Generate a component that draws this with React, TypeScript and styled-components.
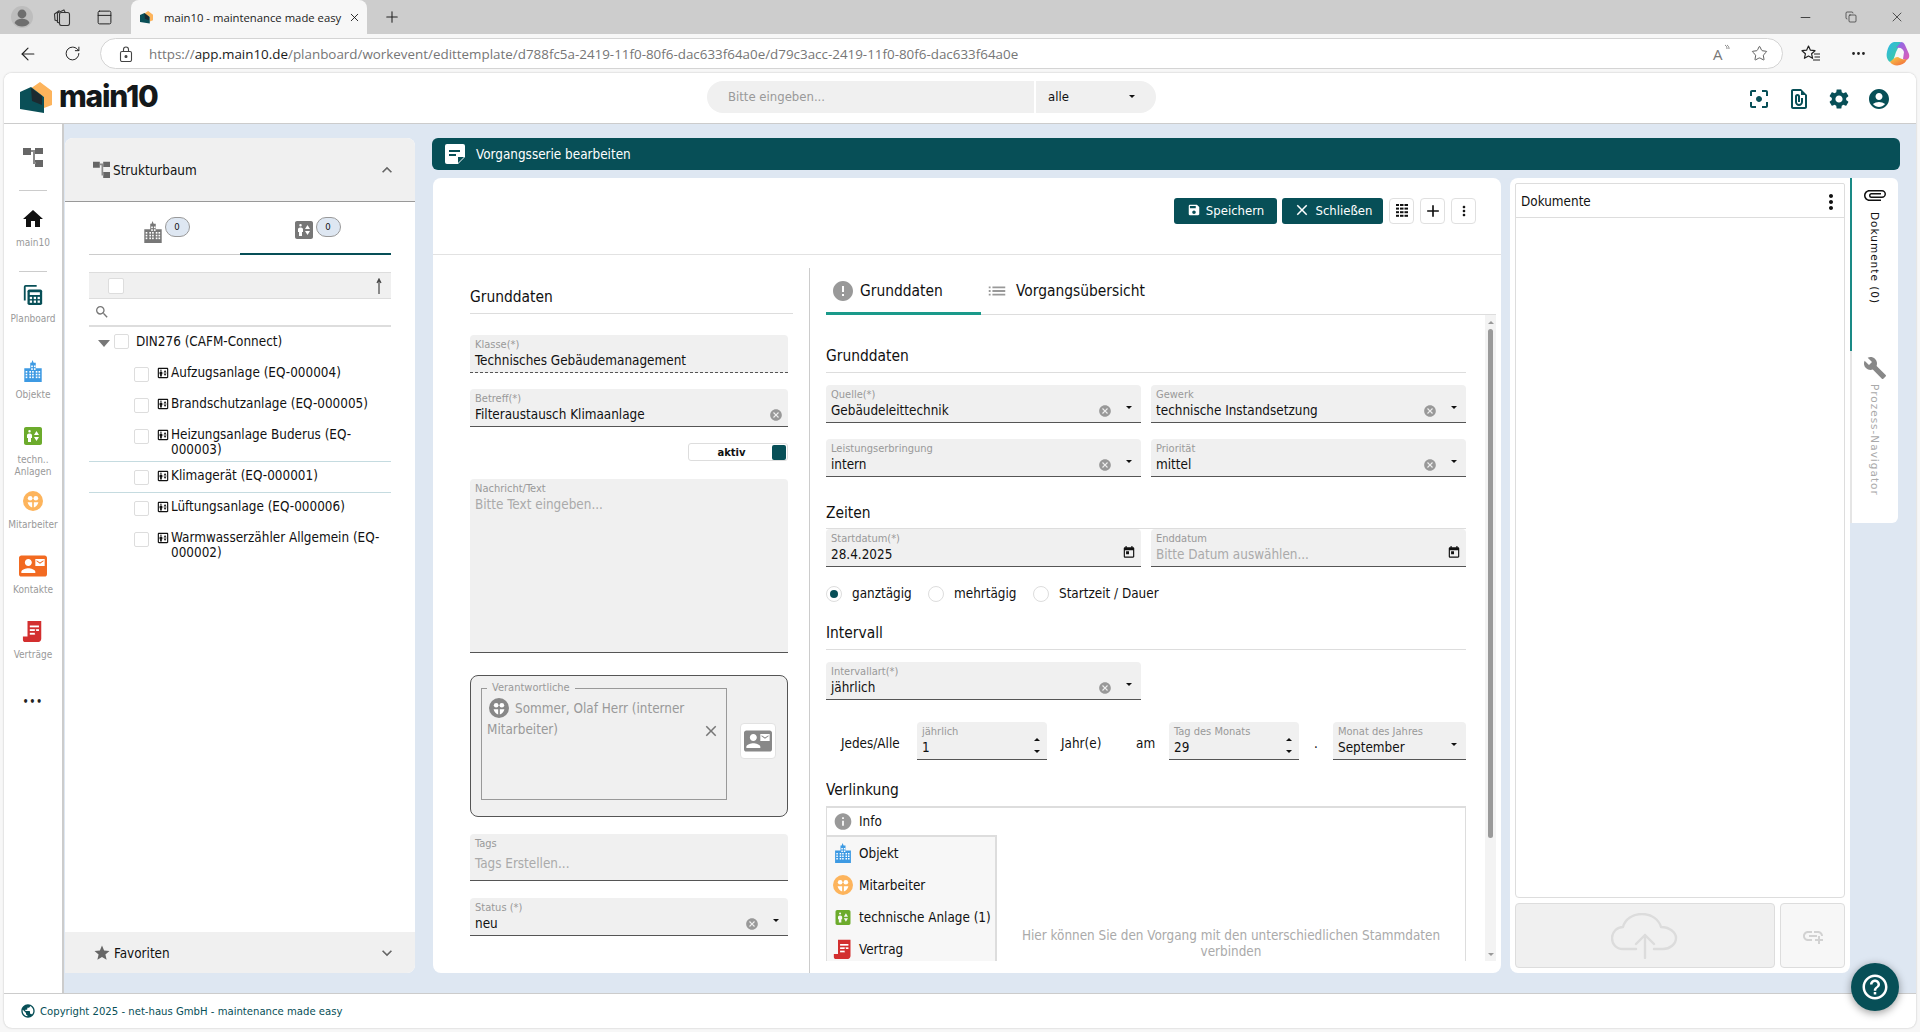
import React from 'react';
import styled, { createGlobalStyle } from 'styled-components';
import { ArrowLeft, Copy, Ellipsis, Minus, PanelTop, Plus, RotateCw, Star, X } from 'lucide-react';
import {
  MdAccountCircle,
  MdAdd,
  MdAddLink,
  MdAttachFile,
  MdBuild,
  MdCancel,
  MdClose,
  MdContactMail,
  MdElevator,
  MdError,
  MdExpandLess,
  MdExpandMore,
  MdFilterCenterFocus,
  MdHelpOutline,
  MdHome,
  MdInfo,
  MdList,
  MdMoreVert,
  MdOutlineElevator,
  MdOutlineFilePresent,
  MdPublic,
  MdSave,
  MdSearch,
  MdSettings,
  MdStar,
  MdToday,
} from 'react-icons/md';

const TEAL = '#074f57';
const BODY_FONT = '"DejaVu Sans", Verdana, sans-serif';

const GlobalStyle = createGlobalStyle`
  html, body {
    margin: 0;
    height: 1032px;
    overflow: hidden;
    background: #f7f7f7;
  }
  * { box-sizing: border-box; }
  body {
    font-family: ${BODY_FONT};
    font-stretch: condensed;
    font-size: 13.4px;
    color: #111;
  }
`;

/* drawn icons */
const BuildingIcon: React.FC<{ size?: number; color?: string }> = ({ size = 22, color = '#3d9ae3' }) => {
  const windows: number[][] = [];
  [4, 8, 11, 15, 18].forEach((x) => [12, 15, 18].forEach((y) => windows.push([x, y])));
  [10, 13].forEach((x) => [6, 9].forEach((y) => windows.push([x, y])));
  return (
    <svg width={size} height={size} viewBox="0 0 24 24">
      <path fill={color} d="M11.5 0l1.2 3H15v6h6.5v15h-19V9H9V3h1.4z" />
      {windows.map(([x, y]) => (
        <rect key={`${x}-${y}`} x={x} y={y} width="1.8" height="1.8" fill="#fff" />
      ))}
    </svg>
  );
};

const PeopleIcon: React.FC<{ size?: number; color?: string }> = ({ size = 20, color = '#fdb45c' }) => (
  <svg width={size} height={size} viewBox="0 0 24 24">
    <circle cx="12" cy="12" r="12" fill={color} />
    <circle cx="8.6" cy="8.7" r="2.8" fill="#fff" />
    <circle cx="15.4" cy="8.7" r="2.8" fill="#fff" />
    <path fill="#fff" d="M5.500 13.400h5.500v6.400c-2.800-.9-4.800-3.300-5.500-6.400zM13 13.400h5.500c-.7 3.100-2.700 5.500-5.500 6.400z" />
  </svg>
);

const ContractIcon: React.FC<{ size?: number }> = ({ size = 22 }) => (
  <svg width={size} height={size} viewBox="0 0 24 24">
    <path fill="#d32f2f" d="M6 1h15v19.5c0 1.9-1.4 3.5-3 3.5H3.5C2 24 1 23 1 21.5V18h5z" />
    <rect x="8.5" y="6" width="10" height="2" fill="#fff" />
    <rect x="8.5" y="10" width="10" height="2" fill="#fff" />
    <rect x="8.5" y="14" width="6" height="2" fill="#fff" />
    <rect x="14" y="10" width="1.4" height="6" fill="#d32f2f" />
  </svg>
);

const TreeIcon: React.FC<{ size?: number }> = ({ size = 20 }) => (
  <svg width={size} height={size} viewBox="0 0 20 20">
    <path fill="#666" d="M0 1h8v7H0zM12 1h8v6h-8zM12 13h8v7h-8z" />
    <path fill="#8a8a8a" d="M8 3h4v2H8zM10 5h2v11h-2zM10 15h3v2h-3z" />
  </svg>
);

const PlanIcon: React.FC<{ size?: number }> = ({ size = 22 }) => (
  <svg width={size} height={size} viewBox="0 0 24 24">
    <path fill="none" stroke={TEAL} strokeWidth="2" d="M3 18V3a1 1 0 0 1 1-1h12" />
    <rect x="6" y="6" width="16" height="17" rx="2" fill={TEAL} />
    <rect x="8.5" y="9" width="11" height="3" fill="#fff" />
    {[8.5, 12.8, 17].flatMap((x) =>
      [14, 18].map((y) => <rect key={`${x}-${y}`} x={x} y={y} width="2.5" height="2.5" fill="#fff" />),
    )}
  </svg>
);

const NoteIcon: React.FC = () => (
  <svg width="20" height="20" viewBox="0 0 20 20">
    <path fill="#fff" d="M2 0h16a2 2 0 0 1 2 2v11l-7 7H2a2 2 0 0 1-2-2V2a2 2 0 0 1 2-2z" />
    <path fill={TEAL} d="M4 6h11v2H4zM4 10h7v2H4zM13 13h6l-6 6z" />
  </svg>
);

const GridLinesIcon: React.FC = () => (
  <svg width="12" height="14" viewBox="0 0 12 14">
    {[0, 3.6, 7.2, 10.8].map((y) => (
      <React.Fragment key={y}>
        <rect x="0" y={y} width="3" height="2" fill="#111" />
        <rect x="4" y={y} width="8" height="2" fill="#111" />
      </React.Fragment>
    ))}
    <rect x="7.5" y="0" width="1" height="13" fill="#fff" />
  </svg>
);

const CloudIcon: React.FC = () => (
  <svg width="68" height="46" viewBox="0 0 68 46" fill="none" stroke="#dcdcdc" strokeWidth="2.4" strokeLinecap="round" strokeLinejoin="round">
    <path d="M25 36H12C5 36 1 31 1 25c0-6 5-11 11-11C14 6 22 1 31 1c10 0 17 6 19 13 8 0 15 5 15 11 0 6-6 11-13 11H43" />
    <path d="M34 45V22M25 31l9-9 9 9" />
  </svg>
);

const LogoSvg = styled.svg`
  flex: none;
`;

const LogoMark: React.FC<{ size?: number }> = ({ size = 32 }) => (
  <LogoSvg width={size} height={size} viewBox="0 0 32 32">
    <path fill="#fdb45c" d="M20 0l12 9v14l-8 3V15L10 7z" />
    <path fill="#0a4f57" d="M0 10l11-5 13 10v16L0 27z" />
    <path fill="#1c2a30" d="M11 6l11 8v9l-10-4z" />
  </LogoSvg>
);

const ProfileIcon: React.FC = () => (
  <svg width="22" height="22" viewBox="0 0 22 22">
    <circle cx="11" cy="11" r="11" fill="#bdbdbd" />
    <circle cx="11" cy="8" r="4.4" fill="#6e6e6e" />
    <path fill="#6e6e6e" d="M3.5 17c1-3 4-4.3 7.5-4.3s6.500 1.300 7.500 4.300c-2 2.400-4.500 3.500-7.500 3.500S5.500 19.400 3.500 17z" />
  </svg>
);

const CollectionsIcon: React.FC = () => (
  <svg width="18" height="18" viewBox="0 0 18 18" fill="none" stroke="#333" strokeWidth="1.1">
    <rect x="6.500" y="4.500" width="10" height="13" rx="2" />
    <path d="M6.500 15l-2-.6-.1-9.400 6.500-3 1.600 3M4.400 13L2 12 1.500 6l5-3.500" />
  </svg>
);

const LockIcon: React.FC = () => (
  <svg width="14" height="16" viewBox="0 0 14 16" fill="none" stroke="#444" strokeWidth="1.100">
    <rect x="1.500" y="5.500" width="11" height="10" rx="1.500" />
    <path d="M4.500 5.500V3.500a2.500 2.500 0 0 1 5 0v2" />
    <circle cx="7" cy="10.500" r="1" fill="#444" />
  </svg>
);

const FavoritesIcon: React.FC = () => (
  <svg width="20" height="20" viewBox="0 0 20 20" fill="none" stroke="#222" strokeWidth="1.200" strokeLinejoin="round">
    <path d="M7.500 2l1.900 4.200 4.600.5-3.400 3.100 1 4.500-4.100-2.300-4.100 2.300 1-4.500L1 6.700l4.600-.5z" />
    <path d="M13 10h6M13.500 13h5.500M12 16h7" />
  </svg>
);

const CopilotIcon: React.FC = () => (
  <svg width="24" height="25" viewBox="0 0 24 25">
    <defs>
      <linearGradient id="cp-a" x1="0" y1="0" x2="1" y2="1">
        <stop offset="0" stopColor="#2fb7ea" />
        <stop offset="1" stopColor="#3fcf8e" />
      </linearGradient>
      <linearGradient id="cp-b" x1="0" y1="0" x2="1" y2="1">
        <stop offset="0" stopColor="#7b6cf0" />
        <stop offset="1" stopColor="#e45bb5" />
      </linearGradient>
      <linearGradient id="cp-c" x1="0" y1="0" x2="1" y2="1">
        <stop offset="0" stopColor="#f7d046" />
        <stop offset="1" stopColor="#f2643c" />
      </linearGradient>
    </defs>
    <path fill="url(#cp-a)" d="M8 1h7l-5 10-3 9-3 1c-3-2-4-6-3-10 1-5 3-9 7-10z" />
    <path fill="url(#cp-b)" d="M15 1c2 0 3 1 4 3l4 9c1 4-1 6-4 6l-2-1 1-7c-1-3-3-5-8-4z" />
    <path fill="url(#cp-c)" d="M4 21c2 3 6 4 10 3 4-1 6-3 7-6-3 1-6 0-9-2-3 0-5 2-8 5z" />
  </svg>
);

/* browser chrome */
const Shell = styled.div`
  height: 1032px;
  display: flex;
  flex-direction: column;
`;

const TabStrip = styled.div`
  height: 34px;
  flex: none;
  background: #cdcdcd;
  display: flex;
  align-items: center;
  padding-left: 11px;
`;

const StripButton = styled.span<{ $w?: number }>`
  width: ${(p) => p.$w ?? 42}px;
  display: flex;
  justify-content: center;
  align-items: center;
  color: #222;
`;

const BrowserTab = styled.div`
  width: 236px;
  height: 34px;
  margin: 0 0 0 14px;
  padding: 0 6px 0 9px;
  background: #f7f7f7;
  border-radius: 8px 8px 0 0;
  display: flex;
  align-items: center;
  gap: 11px;
`;

const TabTitle = styled.span`
  flex: 1;
  min-width: 0;
  font-family: "Open Sans", sans-serif;
  font-stretch: normal;
  font-size: 11.300px;
  color: #222;
  white-space: nowrap;
`;

const TabClose = styled.span`
  flex: none;
  display: flex;
  margin-left: -5px;
`;

const StripSpacer = styled.div`
  flex: 1;
`;

const AddressRow = styled.div`
  height: 36px;
  flex: none;
  background: #f7f7f7;
  display: flex;
  align-items: flex-start;
  padding: 4px 0 0 6px;
`;

const NavButton = styled.span<{ $w?: number }>`
  width: ${(p) => p.$w ?? 44}px;
  height: 31px;
  display: flex;
  justify-content: center;
  align-items: center;
  color: #222;
`;

const AddressBox = styled.div`
  width: 1683px;
  height: 31px;
  margin-left: 6px;
  padding: 0 14px 0 18px;
  background: #fff;
  border: 1px solid #d4d4d4;
  border-radius: 16px;
  display: flex;
  align-items: center;
  gap: 16px;
`;

const UrlText = styled.div`
  flex: 1;
  font-family: "Open Sans", sans-serif;
  font-stretch: normal;
  font-size: 13.400px;
  color: #767676;
  white-space: nowrap;
`;

const UrlHost = styled.span`
  color: #1a1a1a;
`;

const ReadAloud = styled.span`
  display: flex;
  align-items: flex-start;
  gap: 1px;
  width: 22px;
  font-family: "Open Sans", sans-serif;
  font-stretch: normal;
  font-size: 15px;
  line-height: 20px;
  color: #777;
`;

/* app window */
const AppWindow = styled.div`
  position: relative;
  flex: none;
  height: 955px;
  margin: 3px 4px 4px;
  border-radius: 8px;
  overflow: hidden;
  display: flex;
  flex-direction: column;
  background: #fff;
  box-shadow: 0 0 2px rgba(0, 0, 0, 0.25);
`;

const TopBar = styled.header`
  height: 51px;
  flex: none;
  display: flex;
  align-items: center;
  padding: 0 25px 0 16px;
  background: #fff;
  border-bottom: 1px solid #ccc;
`;

const Brand = styled.div`
  width: 687px;
  display: flex;
  align-items: center;
  gap: 7px;
`;

const BrandName = styled.span`
  margin-bottom: 5px;
  font-family: Inter, sans-serif;
  font-stretch: normal;
  font-size: 30px;
  font-weight: 800;
  letter-spacing: -1.200px;
  color: #14181a;
  line-height: 32px;
`;

const SearchGroup = styled.div`
  display: flex;
  height: 32px;
  margin-bottom: 3px;
  gap: 2px;
`;

const SearchInput = styled.div`
  width: 327px;
  padding-left: 21px;
  border-radius: 16px 0 0 16px;
  background: #f0f0f0;
  color: #999;
  font-size: 13px;
  line-height: 31px;
`;

const SearchSelect = styled.div`
  width: 120px;
  padding: 0 21px 0 12px;
  border-radius: 0 16px 16px 0;
  background: #f0f0f0;
  display: flex;
  align-items: center;
  justify-content: space-between;
  font-size: 13px;
`;

const TopActions = styled.div`
  margin-left: auto;
  padding-top: 1px;
  display: flex;
  gap: 16px;
  color: ${TEAL};
`;

const Caret = styled.span`
  flex: none;
  display: inline-block;
  width: 0;
  height: 0;
  border-left: 3px solid transparent;
  border-right: 3px solid transparent;
  border-top: 3px solid #111;
`;

const Workspace = styled.div`
  flex: 1;
  min-height: 0;
  display: flex;
  background: #dee7f2;
`;

const Rail = styled.nav`
  width: 60px;
  flex: none;
  background: #fff;
  border-right: 2px solid #ccc;
  display: flex;
  flex-direction: column;
  align-items: center;
`;

const RailTop = styled.div`
  height: 66px;
  flex: none;
  display: flex;
  align-items: center;
  justify-content: center;
`;

const RailDivider = styled.div`
  width: 28px;
  height: 1px;
  flex: none;
  background: #ccc;
`;

const RailItem = styled.div<{ $h: number; $mt?: number }>`
  height: ${(p) => p.$h}px;
  flex: none;
  width: 100%;
  display: flex;
  flex-direction: column;
  align-items: center;
  margin-top: ${(p) => p.$mt ?? 0}px;
`;

const RailIcon = styled.span`
  height: 24px;
  flex: none;
  display: flex;
  align-items: center;
  justify-content: center;
`;

const RailLabel = styled.span`
  margin-top: 6px;
  font-size: 10px;
  line-height: 12px;
  color: #999;
  text-align: center;
`;

const RailMore = styled.span`
  font-size: 10px;
  font-weight: 700;
  letter-spacing: 1px;
  line-height: 24px;
  color: #222;
`;

const Content = styled.div`
  flex: 1;
  min-width: 0;
  display: flex;
  gap: 17px;
  padding: 14px 16px 20px 1px;
`;

/* structure tree panel */
const TreePanel = styled.aside`
  width: 350px;
  flex: none;
  display: flex;
  flex-direction: column;
  background: #fff;
  border-radius: 8px 8px 8px 0;
  overflow: hidden;
`;

const AccordionHead = styled.div<{ $h: number; $bottom?: boolean }>`
  height: ${(p) => p.$h}px;
  flex: none;
  background: #f0f0f0;
  display: flex;
  align-items: center;
  padding: 0 18px 0 28px;
  gap: 3px;
  border-bottom: ${(p) => (p.$bottom ? 'none' : '1px solid #999')};
`;

const AccordionTitle = styled.span`
  flex: 1;
  padding-top: 2px;
  line-height: 16px;
`;

const TreeBody = styled.div`
  flex: 1;
  min-height: 0;
  padding: 0 24px;
`;

const TreeTabs = styled.div`
  height: 53px;
  display: grid;
  grid-template-columns: 1fr 1fr;
`;

const TreeTab = styled.div<{ $active?: boolean }>`
  position: relative;
  display: flex;
  justify-content: center;
  align-items: flex-end;
  padding: 0 24px 11px 0;
  border-bottom: ${(p) => (p.$active ? `2px solid ${TEAL}` : '1px solid #ccc')};
`;

const CountBadge = styled.span`
  position: absolute;
  top: 15px;
  left: 50%;
  width: 25px;
  height: 20px;
  border: 1px solid #999;
  border-radius: 10px;
  background: #dee7f2;
  font-size: 9.500px;
  line-height: 18px;
  text-align: center;
`;

const TreeTools = styled.div`
  height: 27px;
  margin-top: 17px;
  padding: 0 9px 0 19px;
  background: #f0f0f0;
  border-top: 1px solid #ddd;
  border-bottom: 1px solid #ddd;
  display: flex;
  align-items: center;
  justify-content: space-between;
`;

const CheckBox = styled.span<{ $size?: number }>`
  flex: none;
  display: block;
  width: ${(p) => p.$size ?? 15}px;
  height: ${(p) => p.$size ?? 15}px;
  background: #fff;
  border: 1px solid #ddd;
  border-radius: 2px;
`;

const TreeSearch = styled.div`
  height: 28px;
  padding-left: 5px;
  border-bottom: 2px solid #ddd;
  display: flex;
  align-items: center;
  color: #777;
`;

const RootRow = styled.div`
  height: 32px;
  padding: 0 0 3px 9px;
  display: flex;
  align-items: center;
`;

const Triangle = styled.span`
  flex: none;
  width: 0;
  height: 0;
  margin-right: 4px;
  margin-top: 3px;
  border-left: 6.500px solid transparent;
  border-right: 6.500px solid transparent;
  border-top: 7px solid #777;
`;

const RootLabel = styled.span`
  margin-left: 7px;
`;

const TreeRow = styled.div<{ $rule?: boolean; $h: number }>`
  height: ${(p) => p.$h}px;
  display: flex;
  align-items: flex-start;
  padding: 6px 0 0 45px;
  border-bottom: 1px solid ${(p) => (p.$rule ? '#c5dbe0' : 'transparent')};
`;

const RowCheck = styled.span`
  margin: 2px 7px 0 0;
`;

const RowGlyph = styled.span`
  flex: none;
  display: flex;
  margin: 1px 1px 0 0;
`;

const RowText = styled.span`
  line-height: 15px;
  max-width: 220px;
`;

/* main column */
const MainColumn = styled.main`
  flex: 1;
  min-width: 0;
  display: flex;
  flex-direction: column;
  gap: 8px;
`;

const TitleBar = styled.div`
  height: 32px;
  flex: none;
  background: ${TEAL};
  border-radius: 6px;
  padding-left: 13px;
  display: flex;
  align-items: center;
  gap: 11px;
  color: #fff;
`;

const CardRow = styled.div`
  flex: 1;
  min-height: 0;
  display: flex;
  padding-left: 1px;
`;

const EditCard = styled.section`
  width: 1068px;
  flex: none;
  display: flex;
  flex-direction: column;
  background: #fff;
  border-radius: 8px;
`;

const EditToolbar = styled.div`
  height: 77px;
  flex: none;
  padding: 20px 25px 0 0;
  display: flex;
  justify-content: flex-end;
  gap: 5px;
  border-bottom: 1px solid #e2e2e2;
`;

const PrimaryButton = styled.button<{ $w: number }>`
  width: ${(p) => p.$w}px;
  height: 26px;
  padding: 0 0 2px;
  border: 0;
  border-radius: 3px;
  background: ${TEAL};
  color: #fff;
  font: inherit;
  font-stretch: condensed;
  font-size: 13px;
  display: flex;
  align-items: center;
  justify-content: center;
  gap: 5px;
`;

const IconButton = styled.button`
  width: 25px;
  height: 26px;
  margin-left: 1px;
  padding: 0;
  background: #fff;
  border: 1px solid #e0e0e0;
  border-radius: 4px;
  display: flex;
  align-items: center;
  justify-content: center;
  color: #111;
`;

const EditBody = styled.div`
  flex: 1;
  min-height: 0;
  display: flex;
  padding-top: 13px;
`;

const LeftForm = styled.div`
  width: 377px;
  flex: none;
  padding: 0 16px 0 37px;
  border-right: 1px solid #ccc;
  display: flex;
  flex-direction: column;
`;

const LeftHeading = styled.h2`
  margin: 0 0 21px;
  padding: 20px 0 7px;
  font-size: 15.400px;
  font-weight: 400;
  line-height: 18px;
  border-bottom: 1px solid #ddd;
`;

const FieldBox = styled.div<{ $h?: number; $mt?: number; $dashed?: boolean; $inset?: boolean }>`
  flex: none;
  height: ${(p) => p.$h ?? 38}px;
  margin-top: ${(p) => p.$mt ?? 0}px;
  margin-right: ${(p) => (p.$inset ? 5 : 0)}px;
  padding: 4px 0 0 5px;
  display: flex;
  background: #f0f0f0;
  border-radius: 4px 4px 0 0;
  border-bottom: 1px ${(p) => (p.$dashed ? 'dashed' : 'solid')} #555;
`;

const FieldMain = styled.div`
  flex: 1;
  min-width: 0;
`;

const FieldLabel = styled.div`
  font-size: 11px;
  line-height: 12px;
  color: #999;
`;

const FieldValue = styled.div<{ $muted?: boolean; $gap?: number }>`
  margin-top: ${(p) => p.$gap ?? 1}px;
  line-height: 18px;
  color: ${(p) => (p.$muted ? '#aaa' : '#111')};
  white-space: nowrap;
`;

const FieldTrail = styled.div`
  flex: none;
  display: flex;
  align-items: flex-start;
  gap: 10px;
  padding-right: 5px;
`;

const ClearSlot = styled.span`
  display: flex;
  width: 14px;
  margin-top: 15px;
  color: #999;
`;

const CaretSlot = styled.span`
  display: flex;
  justify-content: center;
  width: 14px;
  margin-top: 17px;
`;

const CalendarSlot = styled.span`
  display: flex;
  width: 14px;
  margin-top: 12px;
  color: #111;
`;

const SpinSlot = styled.span`
  display: flex;
  flex-direction: column;
  align-items: center;
  gap: 9px;
  width: 10px;
  margin: 12px 0 0;
`;

const CaretUp = styled(Caret)`
  transform: rotate(180deg);
`;

const ToggleRow = styled.div`
  align-self: flex-end;
  width: 100px;
  height: 18px;
  flex: none;
  margin: 16px 5px 18px 0;
  padding: 0 1px 0 0;
  background: #fff;
  border: 1px solid #ddd;
  border-radius: 3px;
  display: flex;
  align-items: center;
`;

const ToggleLabel = styled.span`
  flex: 1;
  padding-left: 2px;
  text-align: center;
  font-size: 10px;
  font-weight: 700;
  font-stretch: normal;
`;

const ToggleKnob = styled.span`
  width: 14px;
  height: 15px;
  background: ${TEAL};
  border-radius: 2px;
`;

const ResponsibleBox = styled.div`
  flex: none;
  height: 142px;
  margin: 22px 5px 0 0;
  padding: 6px 11px 0 10px;
  background: #f0f0f0;
  border: 1px solid #555;
  border-radius: 8px;
  display: flex;
  gap: 13px;
`;

const ResponsibleSet = styled.fieldset`
  position: relative;
  width: 246px;
  height: 118px;
  margin: 0;
  padding: 4px 5px 0;
  border: 1px solid #999;
`;

const ResponsibleLegend = styled.legend`
  margin-left: 0;
  padding: 0 5px;
  font-size: 11px;
  line-height: 12px;
  color: #999;
`;

const ChipText = styled.div`
  line-height: 21px;
  color: #999;
`;

const ChipAvatar = styled.span`
  display: inline-flex;
  vertical-align: -5px;
  margin: 0 6px 0 2px;
`;

const ChipRemove = styled.span`
  position: absolute;
  top: 28px;
  right: 6px;
  display: flex;
  color: #777;
`;

const ContactButton = styled.div`
  width: 36px;
  height: 36px;
  flex: none;
  margin-top: 41px;
  background: #fff;
  border: 1px solid #e2e2e2;
  border-radius: 4px;
  display: flex;
  align-items: center;
  justify-content: center;
  color: #888;
`;

/* right form */
const RightForm = styled.div`
  flex: 1;
  min-width: 0;
  padding: 0 5px 0 16px;
  display: flex;
  flex-direction: column;
`;

const FormTabs = styled.div`
  height: 47px;
  flex: none;
  display: flex;
  border-bottom: 1px solid #ddd;
`;

const FormTab = styled.div<{ $active?: boolean; $w: number; $gap: number }>`
  width: ${(p) => p.$w}px;
  height: 47px;
  padding: 2px 0 0 5px;
  display: flex;
  align-items: center;
  gap: ${(p) => p.$gap}px;
  font-size: 15.400px;
  border-bottom: ${(p) => (p.$active ? '3px solid #1a9a8a' : '3px solid transparent')};
`;

const ScrollArea = styled.div`
  height: 646px;
  flex: none;
  display: flex;
  gap: 19px;
  overflow: hidden;
`;

const FormContent = styled.div`
  width: 640px;
  flex: none;
  display: flex;
  flex-direction: column;
`;

const SubHeading = styled.h3<{ $mt: number; $plain?: boolean; $pb?: number }>`
  margin: ${(p) => p.$mt}px 0 0;
  padding-bottom: ${(p) => p.$pb ?? 7}px;
  flex: none;
  font-size: 15.400px;
  font-weight: 400;
  line-height: 18px;
  border-bottom: ${(p) => (p.$plain ? 'none' : '1px solid #ddd')};
`;

const FieldGrid = styled.div<{ $mt?: number }>`
  flex: none;
  margin-top: ${(p) => p.$mt ?? 12}px;
  display: grid;
  grid-template-columns: 315px 315px;
  column-gap: 10px;
  row-gap: 16px;
`;

const RadioRow = styled.div`
  flex: none;
  height: 16px;
  margin-top: 19px;
  display: flex;
  align-items: center;
`;

const RadioDot = styled.span<{ $on?: boolean }>`
  width: 16px;
  height: 16px;
  flex: none;
  border: 1px solid #ddd;
  border-radius: 50%;
  background: #fff;
  display: flex;
  align-items: center;
  justify-content: center;
  &::after {
    content: '';
    display: ${(p) => (p.$on ? 'block' : 'none')};
    width: 8px;
    height: 8px;
    border-radius: 50%;
    background: ${TEAL};
  }
`;

const RadioLabel = styled.span<{ $w: number }>`
  width: ${(p) => p.$w}px;
  padding: 0 0 2px 10px;
`;

const IntervalRow = styled.div`
  flex: none;
  margin-top: 22px;
  height: 38px;
  display: grid;
  grid-template-columns: 91px 130px 75px 47px 130px 34px 133px;
  align-items: center;
`;

const RowWord = styled.span<{ $pl?: number; $center?: boolean }>`
  padding: 4px 0 0 ${(p) => p.$pl ?? 14}px;
  text-align: ${(p) => (p.$center ? 'center' : 'left')};
`;

const LinkBox = styled.div`
  flex: none;
  height: 300px;
  border: 1px solid #ddd;
  border-top-width: 2px;
  display: flex;
`;

const LinkMenu = styled.div`
  width: 170px;
  flex: none;
`;

const LinkRow = styled.div<{ $first?: boolean }>`
  height: ${(p) => (p.$first ? 29 : 32)}px;
  padding-left: 6px;
  display: flex;
  align-items: center;
  gap: 6px;
  background: ${(p) => (p.$first ? '#fff' : '#f7f7f7')};
  border-right: ${(p) => (p.$first ? 'none' : '2px solid #ddd')};
  border-bottom: ${(p) => (p.$first ? '2px solid #ddd' : 'none')};
`;

const LinkGlyph = styled.span`
  width: 20px;
  flex: none;
  display: flex;
  justify-content: center;
`;

const LinkHint = styled.div`
  flex: 1;
  padding: 120px 20px 0;
  color: #aaa;
  line-height: 16px;
  text-align: center;
`;

const Scrollbar = styled.div`
  width: 11px;
  flex: none;
  background: #f3f3f3;
  display: flex;
  flex-direction: column;
  align-items: center;
  padding: 6px 0 5px;
`;

const ScrollThumb = styled.div`
  width: 5px;
  height: 509px;
  margin-top: 5px;
  background: #9a9a9a;
  border-radius: 3px;
`;

const ScrollGap = styled.div`
  flex: 1;
`;

const ScrollUp = styled(Caret)`
  border-top-color: #999;
  transform: rotate(180deg);
`;

const ScrollDown = styled(Caret)`
  border-top-color: #999;
`;

/* documents */
const DocCard = styled.section`
  width: 340px;
  flex: none;
  margin-left: 9px;
  padding: 5px;
  background: #fff;
  border-radius: 8px 0 8px 8px;
  display: flex;
  flex-direction: column;
  gap: 5px;
`;

const DocList = styled.div`
  flex: 1;
  min-height: 0;
  border: 1px solid #ddd;
  border-radius: 2px 2px 4px 4px;
`;

const DocHead = styled.div`
  height: 34px;
  padding: 2px 1px 0 5px;
  display: flex;
  align-items: center;
  justify-content: space-between;
  border-bottom: 1px solid #ddd;
`;

const DocActions = styled.div`
  height: 65px;
  flex: none;
  display: flex;
  gap: 5px;
`;

const DropZone = styled.div<{ $w: number; $light?: boolean }>`
  width: ${(p) => p.$w}px;
  background: ${(p) => (p.$light ? '#f7f7f7' : '#f0f0f0')};
  border: 1px solid #ddd;
  border-radius: 4px;
  display: flex;
  align-items: center;
  justify-content: center;
  color: #d2d2d2;
`;

const SideTabs = styled.div`
  width: 48px;
  height: 345px;
  flex: none;
  background: #fff;
  border-radius: 0 6px 6px 0;
  display: flex;
  flex-direction: column;
`;

const SideTab = styled.div<{ $active?: boolean; $h: number }>`
  height: ${(p) => p.$h}px;
  padding: 5px 0 0 0;
  border-left: 2px solid ${(p) => (p.$active ? '#1a8a86' : '#e5e5e5')};
  display: flex;
  flex-direction: column;
  align-items: center;
  gap: ${(p) => (p.$active ? 5 : 4)}px;
  color: ${(p) => (p.$active ? '#111' : '#aaa')};
`;

const PaperclipGlyph = styled.span`
  display: flex;
  transform: rotate(90deg);
`;

const SideLabel = styled.span`
  writing-mode: vertical-rl;
  font-size: 10.500px;
  font-stretch: normal;
  letter-spacing: 1px;
  line-height: 14px;
`;

/* footer */
const Footer = styled.footer`
  height: 35px;
  flex: none;
  padding-left: 16px;
  display: flex;
  align-items: center;
  gap: 4px;
  border-top: 1px solid #ccc;
  color: ${TEAL};
  font-size: 10.100px;
  font-stretch: normal;
`;

const HelpFab = styled.div`
  position: absolute;
  right: 17px;
  bottom: 17px;
  width: 48px;
  height: 48px;
  border-radius: 50%;
  background: ${TEAL};
  box-shadow: 0 2px 8px rgba(0, 0, 0, 0.4);
  display: flex;
  align-items: center;
  justify-content: center;
  color: #fff;
`;

type FieldProps = {
  label: string;
  value?: string;
  placeholder?: string;
  clear?: boolean;
  caret?: boolean;
  calendar?: boolean;
  spin?: boolean;
  dashed?: boolean;
  inset?: boolean;
  h?: number;
  mt?: number;
  gap?: number;
};

const Field: React.FC<FieldProps> = ({ label, value, placeholder, clear, caret, calendar, spin, dashed, inset, h, mt, gap }) => (
  <FieldBox $h={h} $mt={mt} $dashed={dashed} $inset={inset}>
    <FieldMain>
      <FieldLabel>{label}</FieldLabel>
      <FieldValue $muted={!value} $gap={gap}>
        {value || placeholder}
      </FieldValue>
    </FieldMain>
    <FieldTrail>
      {clear && (
        <ClearSlot>
          <MdCancel size={14} />
        </ClearSlot>
      )}
      {caret && (
        <CaretSlot>
          <Caret />
        </CaretSlot>
      )}
      {calendar && (
        <CalendarSlot>
          <MdToday size={15} />
        </CalendarSlot>
      )}
      {spin && (
        <SpinSlot>
          <CaretUp />
          <Caret />
        </SpinSlot>
      )}
    </FieldTrail>
  </FieldBox>
);

const plants = [
  { name: 'Aufzugsanlage (EQ-000004)', h: 31 },
  { name: 'Brandschutzanlage (EQ-000005)', h: 31 },
  { name: 'Heizungsanlage Buderus (EQ-000003)', h: 41, rule: true },
  { name: 'Klimagerät (EQ-000001)', h: 31, rule: true },
  { name: 'Lüftungsanlage (EQ-000006)', h: 31 },
  { name: 'Warmwasserzähler Allgemein (EQ-000002)', h: 41 },
];

const App: React.FC = () => (
  <Shell>
    <GlobalStyle />
    <TabStrip>
      <StripButton $w={22}>
        <ProfileIcon />
      </StripButton>
      <StripButton $w={58}>
        <CollectionsIcon />
      </StripButton>
      <StripButton $w={26}>
        <PanelTop size={17} strokeWidth={1.4} />
      </StripButton>
      <BrowserTab>
        <LogoMark size={13} />
        <TabTitle>main10 - maintenance made easy</TabTitle>
        <TabClose>
          <X size={13} strokeWidth={1.6} />
        </TabClose>
      </BrowserTab>
      <StripButton $w={50}>
        <Plus size={18} strokeWidth={1.4} />
      </StripButton>
      <StripSpacer />
      <StripButton $w={46}>
        <Minus size={15} strokeWidth={1.3} />
      </StripButton>
      <StripButton $w={46}>
        <Copy size={12} strokeWidth={1.3} />
      </StripButton>
      <StripButton $w={46}>
        <X size={16} strokeWidth={1.1} />
      </StripButton>
    </TabStrip>

    <AddressRow>
      <NavButton>
        <ArrowLeft size={20} strokeWidth={1.4} />
      </NavButton>
      <NavButton>
        <RotateCw size={17} strokeWidth={1.4} />
      </NavButton>
      <AddressBox>
        <LockIcon />
        <UrlText>
          https://<UrlHost>app.main10.de</UrlHost>
          /planboard/workevent/edittemplate/d788fc5a-2419-11f0-80f6-dac633f64a0e/d79c3acc-2419-11f0-80f6-dac633f64a0e
        </UrlText>
        <ReadAloud>
          A
          <svg width="6" height="9" viewBox="0 0 6 9" fill="none" stroke="#777" strokeWidth="0.9">
            <path d="M1 1c1.500 1 2 2 2 4M3 1c1.500 1 2 2 2 4" />
          </svg>
        </ReadAloud>
        <Star size={17} strokeWidth={1.2} color="#444" />
      </AddressBox>
      <NavButton $w={56}>
        <FavoritesIcon />
      </NavButton>
      <NavButton $w={38}>
        <Ellipsis size={17} strokeWidth={2} />
      </NavButton>
      <NavButton $w={42}>
        <CopilotIcon />
      </NavButton>
    </AddressRow>

    <AppWindow>
      <TopBar>
        <Brand>
          <LogoMark />
          <BrandName>main10</BrandName>
        </Brand>
        <SearchGroup>
          <SearchInput>Bitte eingeben...</SearchInput>
          <SearchSelect>
            alle
            <Caret />
          </SearchSelect>
        </SearchGroup>
        <TopActions>
          <MdFilterCenterFocus size={24} />
          <MdOutlineFilePresent size={24} />
          <MdSettings size={24} />
          <MdAccountCircle size={24} />
        </TopActions>
      </TopBar>

      <Workspace>
        <Rail>
          <RailTop>
            <TreeIcon />
          </RailTop>
          <RailDivider />
          <RailItem $h={64} $mt={16}>
            <RailIcon>
              <MdHome size={24} color="#111" />
            </RailIcon>
            <RailLabel>main10</RailLabel>
          </RailItem>
          <RailDivider />
          <RailItem $h={76} $mt={11}>
            <RailIcon>
              <PlanIcon />
            </RailIcon>
            <RailLabel>Planboard</RailLabel>
          </RailItem>
          <RailItem $h={65}>
            <RailIcon>
              <BuildingIcon />
            </RailIcon>
            <RailLabel>Objekte</RailLabel>
          </RailItem>
          <RailItem $h={65}>
            <RailIcon>
              <MdElevator size={24} color="#6cab2c" />
            </RailIcon>
            <RailLabel>
              techn..
              <br />
              Anlagen
            </RailLabel>
          </RailItem>
          <RailItem $h={65}>
            <RailIcon>
              <PeopleIcon />
            </RailIcon>
            <RailLabel>Mitarbeiter</RailLabel>
          </RailItem>
          <RailItem $h={65}>
            <RailIcon>
              <MdContactMail size={28} color="#f26a21" />
            </RailIcon>
            <RailLabel>Kontakte</RailLabel>
          </RailItem>
          <RailItem $h={71}>
            <RailIcon>
              <ContractIcon />
            </RailIcon>
            <RailLabel>Verträge</RailLabel>
          </RailItem>
          <RailMore>•••</RailMore>
        </Rail>

        <Content>
          <TreePanel>
            <AccordionHead $h={64}>
              <TreeIcon size={17} />
              <AccordionTitle>Strukturbaum</AccordionTitle>
              <MdExpandLess size={20} color="#666" />
            </AccordionHead>
            <TreeBody>
              <TreeTabs>
                <TreeTab>
                  <BuildingIcon size={22} color="#777" />
                  <CountBadge>0</CountBadge>
                </TreeTab>
                <TreeTab $active>
                  <MdElevator size={24} color="#777" />
                  <CountBadge>0</CountBadge>
                </TreeTab>
              </TreeTabs>
              <TreeTools>
                <CheckBox $size={16} />
                <svg width="6" height="16" viewBox="0 0 6 16">
                  <path d="M3 1v15M1 5l2-4 2 4" fill="none" stroke="#444" strokeWidth="1.200" />
                </svg>
              </TreeTools>
              <TreeSearch>
                <MdSearch size={16} />
              </TreeSearch>
              <RootRow>
                <Triangle />
                <CheckBox />
                <RootLabel>DIN276 (CAFM-Connect)</RootLabel>
              </RootRow>
              {plants.map((plant) => (
                <TreeRow key={plant.name} $h={plant.h} $rule={plant.rule}>
                  <RowCheck>
                    <CheckBox />
                  </RowCheck>
                  <RowGlyph>
                    <MdOutlineElevator size={14} color="#111" />
                  </RowGlyph>
                  <RowText>{plant.name}</RowText>
                </TreeRow>
              ))}
            </TreeBody>
            <AccordionHead $h={41} $bottom>
              <MdStar size={18} color="#666" />
              <AccordionTitle>Favoriten</AccordionTitle>
              <MdExpandMore size={20} color="#666" />
            </AccordionHead>
          </TreePanel>

          <MainColumn>
            <TitleBar>
              <NoteIcon />
              Vorgangsserie bearbeiten
            </TitleBar>
            <CardRow>
              <EditCard>
                <EditToolbar>
                  <PrimaryButton $w={103}>
                    <MdSave size={14} />
                    Speichern
                  </PrimaryButton>
                  <PrimaryButton $w={101}>
                    <MdClose size={18} />
                    Schließen
                  </PrimaryButton>
                  <IconButton>
                    <GridLinesIcon />
                  </IconButton>
                  <IconButton>
                    <MdAdd size={20} />
                  </IconButton>
                  <IconButton>
                    <MdMoreVert size={16} />
                  </IconButton>
                </EditToolbar>
                <EditBody>
                  <LeftForm>
                    <LeftHeading>Grunddaten</LeftHeading>
                    <Field inset dashed label="Klasse(*)" value="Technisches Gebäudemanagement" />
                    <Field inset mt={16} clear label="Betreff(*)" value="Filteraustausch Klimaanlage" />
                    <ToggleRow>
                      <ToggleLabel>aktiv</ToggleLabel>
                      <ToggleKnob />
                    </ToggleRow>
                    <Field inset h={174} label="Nachricht/Text" placeholder="Bitte Text eingeben..." />
                    <ResponsibleBox>
                      <ResponsibleSet>
                        <ResponsibleLegend>Verantwortliche</ResponsibleLegend>
                        <ChipText>
                          <ChipAvatar>
                            <PeopleIcon color="#888" />
                          </ChipAvatar>
                          Sommer, Olaf Herr (interner Mitarbeiter)
                        </ChipText>
                        <ChipRemove>
                          <MdClose size={18} />
                        </ChipRemove>
                      </ResponsibleSet>
                      <ContactButton>
                        <MdContactMail size={28} />
                      </ContactButton>
                    </ResponsibleBox>
                    <Field inset mt={17} h={47} gap={5} label="Tags" placeholder="Tags Erstellen..." />
                    <Field inset mt={17} clear caret label="Status (*)" value="neu" />
                  </LeftForm>

                  <RightForm>
                    <FormTabs>
                      <FormTab $active $w={155} $gap={5}>
                        <MdError size={24} color="#999" />
                        Grunddaten
                      </FormTab>
                      <FormTab $w={300} $gap={8}>
                        <MdList size={22} color="#999" />
                        Vorgangsübersicht
                      </FormTab>
                    </FormTabs>
                    <ScrollArea>
                      <FormContent>
                        <SubHeading $mt={32}>Grunddaten</SubHeading>
                        <FieldGrid>
                          <Field clear caret label="Quelle(*)" value="Gebäudeleittechnik" />
                          <Field clear caret label="Gewerk" value="technische Instandsetzung" />
                          <Field clear caret label="Leistungserbringung" value="intern" />
                          <Field clear caret label="Priorität" value="mittel" />
                        </FieldGrid>
                        <SubHeading $mt={27} $pb={6}>
                          Zeiten
                        </SubHeading>
                        <FieldGrid $mt={0}>
                          <Field calendar label="Startdatum(*)" value="28.4.2025" />
                          <Field calendar label="Enddatum" placeholder="Bitte Datum auswählen..." />
                        </FieldGrid>
                        <RadioRow>
                          <RadioDot $on />
                          <RadioLabel $w={86}>ganztägig</RadioLabel>
                          <RadioDot />
                          <RadioLabel $w={89}>mehrtägig</RadioLabel>
                          <RadioDot />
                          <RadioLabel $w={140}>Startzeit / Dauer</RadioLabel>
                        </RadioRow>
                        <SubHeading $mt={22}>Intervall</SubHeading>
                        <FieldGrid>
                          <Field clear caret label="Intervallart(*)" value="jährlich" />
                        </FieldGrid>
                        <IntervalRow>
                          <RowWord $pl={15}>Jedes/Alle</RowWord>
                          <Field spin label="jährlich" value="1" />
                          <RowWord>Jahr(e)</RowWord>
                          <RowWord>am</RowWord>
                          <Field spin label="Tag des Monats" value="29" />
                          <RowWord $center $pl={0}>
                            .
                          </RowWord>
                          <Field caret label="Monat des Jahres" value="September" />
                        </IntervalRow>
                        <SubHeading $mt={21} $plain>
                          Verlinkung
                        </SubHeading>
                        <LinkBox>
                          <LinkMenu>
                            <LinkRow $first>
                              <LinkGlyph>
                                <MdInfo size={23} color="#999" />
                              </LinkGlyph>
                              Info
                            </LinkRow>
                            <LinkRow>
                              <LinkGlyph>
                                <BuildingIcon size={20} />
                              </LinkGlyph>
                              Objekt
                            </LinkRow>
                            <LinkRow>
                              <LinkGlyph>
                                <PeopleIcon />
                              </LinkGlyph>
                              Mitarbeiter
                            </LinkRow>
                            <LinkRow>
                              <LinkGlyph>
                                <MdElevator size={23} color="#6cab2c" />
                              </LinkGlyph>
                              technische Anlage (1)
                            </LinkRow>
                            <LinkRow>
                              <LinkGlyph>
                                <ContractIcon />
                              </LinkGlyph>
                              Vertrag
                            </LinkRow>
                          </LinkMenu>
                          <LinkHint>Hier können Sie den Vorgang mit den unterschiedlichen Stammdaten verbinden</LinkHint>
                        </LinkBox>
                      </FormContent>
                      <Scrollbar>
                        <ScrollUp />
                        <ScrollThumb />
                        <ScrollGap />
                        <ScrollDown />
                      </Scrollbar>
                    </ScrollArea>
                  </RightForm>
                </EditBody>
              </EditCard>

              <DocCard>
                <DocList>
                  <DocHead>
                    Dokumente
                    <MdMoreVert size={24} color="#111" />
                  </DocHead>
                </DocList>
                <DocActions>
                  <DropZone $w={260}>
                    <CloudIcon />
                  </DropZone>
                  <DropZone $w={65} $light>
                    <MdAddLink size={24} />
                  </DropZone>
                </DocActions>
              </DocCard>
              <SideTabs>
                <SideTab $active $h={173}>
                  <PaperclipGlyph>
                    <MdAttachFile size={24} />
                  </PaperclipGlyph>
                  <SideLabel>Dokumente (0)</SideLabel>
                </SideTab>
                <SideTab $h={172}>
                  <MdBuild size={24} color="#888" />
                  <SideLabel>Prozess-Navigator</SideLabel>
                </SideTab>
              </SideTabs>
            </CardRow>
          </MainColumn>
        </Content>
      </Workspace>

      <Footer>
        <MdPublic size={16} />
        Copyright 2025 - net-haus GmbH - maintenance made easy
      </Footer>
      <HelpFab>
        <MdHelpOutline size={30} />
      </HelpFab>
    </AppWindow>
  </Shell>
);

export default App;
